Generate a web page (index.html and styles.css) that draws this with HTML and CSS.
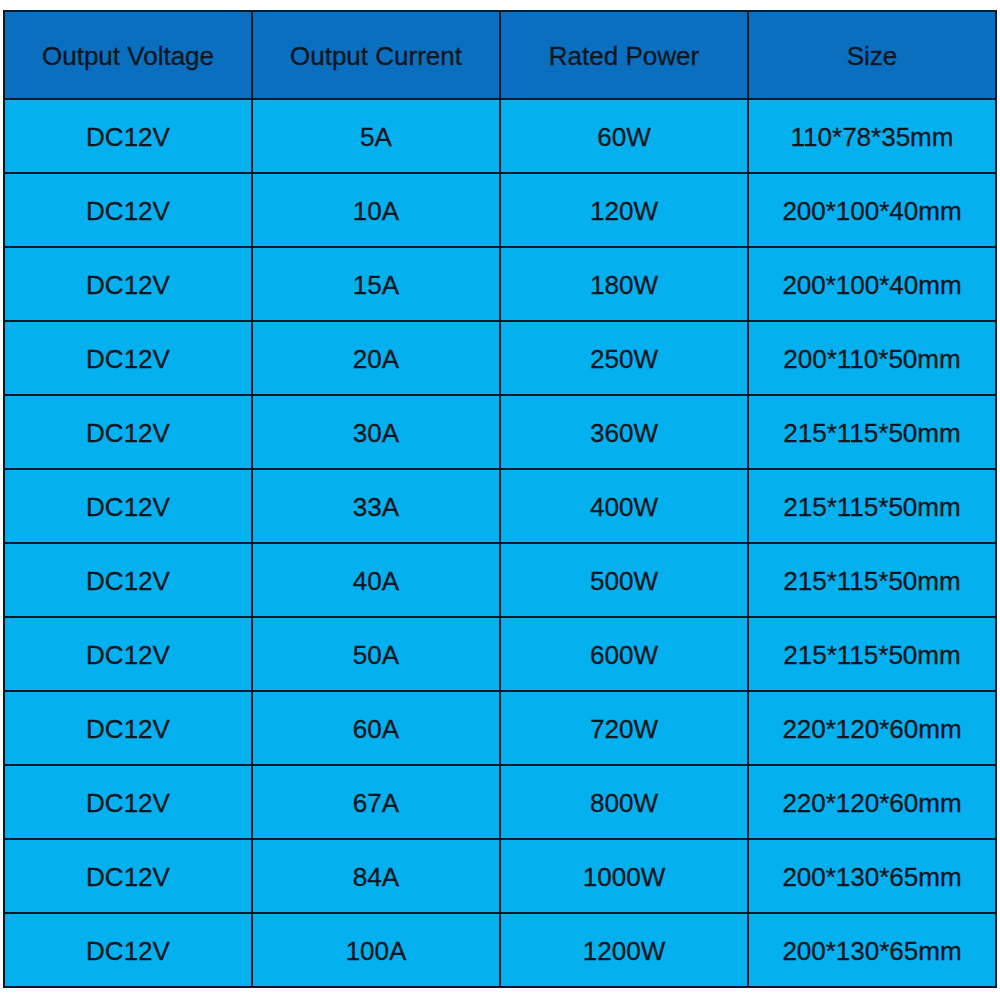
FILE: index.html
```html
<!DOCTYPE html>
<html>
<head>
<meta charset="utf-8">
<link rel="stylesheet" href="styles.css">
</head>
<body>
<div class="spec">
  <div class="cell head">Output Voltage</div>
  <div class="cell head">Output Current</div>
  <div class="cell head">Rated Power</div>
  <div class="cell head">Size</div>

  <div class="cell">DC12V</div><div class="cell">5A</div><div class="cell">60W</div><div class="cell">110*78*35mm</div>
  <div class="cell">DC12V</div><div class="cell">10A</div><div class="cell">120W</div><div class="cell">200*100*40mm</div>
  <div class="cell">DC12V</div><div class="cell">15A</div><div class="cell">180W</div><div class="cell">200*100*40mm</div>
  <div class="cell">DC12V</div><div class="cell">20A</div><div class="cell">250W</div><div class="cell">200*110*50mm</div>
  <div class="cell">DC12V</div><div class="cell">30A</div><div class="cell">360W</div><div class="cell">215*115*50mm</div>
  <div class="cell">DC12V</div><div class="cell">33A</div><div class="cell">400W</div><div class="cell">215*115*50mm</div>
  <div class="cell">DC12V</div><div class="cell">40A</div><div class="cell">500W</div><div class="cell">215*115*50mm</div>
  <div class="cell">DC12V</div><div class="cell">50A</div><div class="cell">600W</div><div class="cell">215*115*50mm</div>
  <div class="cell">DC12V</div><div class="cell">60A</div><div class="cell">720W</div><div class="cell">220*120*60mm</div>
  <div class="cell">DC12V</div><div class="cell">67A</div><div class="cell">800W</div><div class="cell">220*120*60mm</div>
  <div class="cell">DC12V</div><div class="cell">84A</div><div class="cell">1000W</div><div class="cell">200*130*65mm</div>
  <div class="cell">DC12V</div><div class="cell">100A</div><div class="cell">1200W</div><div class="cell">200*130*65mm</div>
</div>
</body>
</html>
```
FILE: styles.css
```css
html, body {
  margin: 0;
  padding: 0;
  background: #ffffff;
}
body {
  padding: 10px 3px 0 3px;
}
.spec {
  width: 994px;
  box-sizing: border-box;
  display: grid;
  grid-template-columns: repeat(4, 1fr);
  grid-template-rows: 86px repeat(12, 72px);
  gap: 2px;
  padding: 2px;
  background: #0b1a2b;
  font-family: "Liberation Sans", Arial, sans-serif;
  font-size: 26px;
  color: #0d1620;
  -webkit-text-stroke: 0.3px #0d1620;
}
.cell {
  background: #05b0ee;
  display: flex;
  align-items: center;
  justify-content: center;
  padding-top: 2px;
}
.cell.head {
  background: #0a6fbe;
}
```
